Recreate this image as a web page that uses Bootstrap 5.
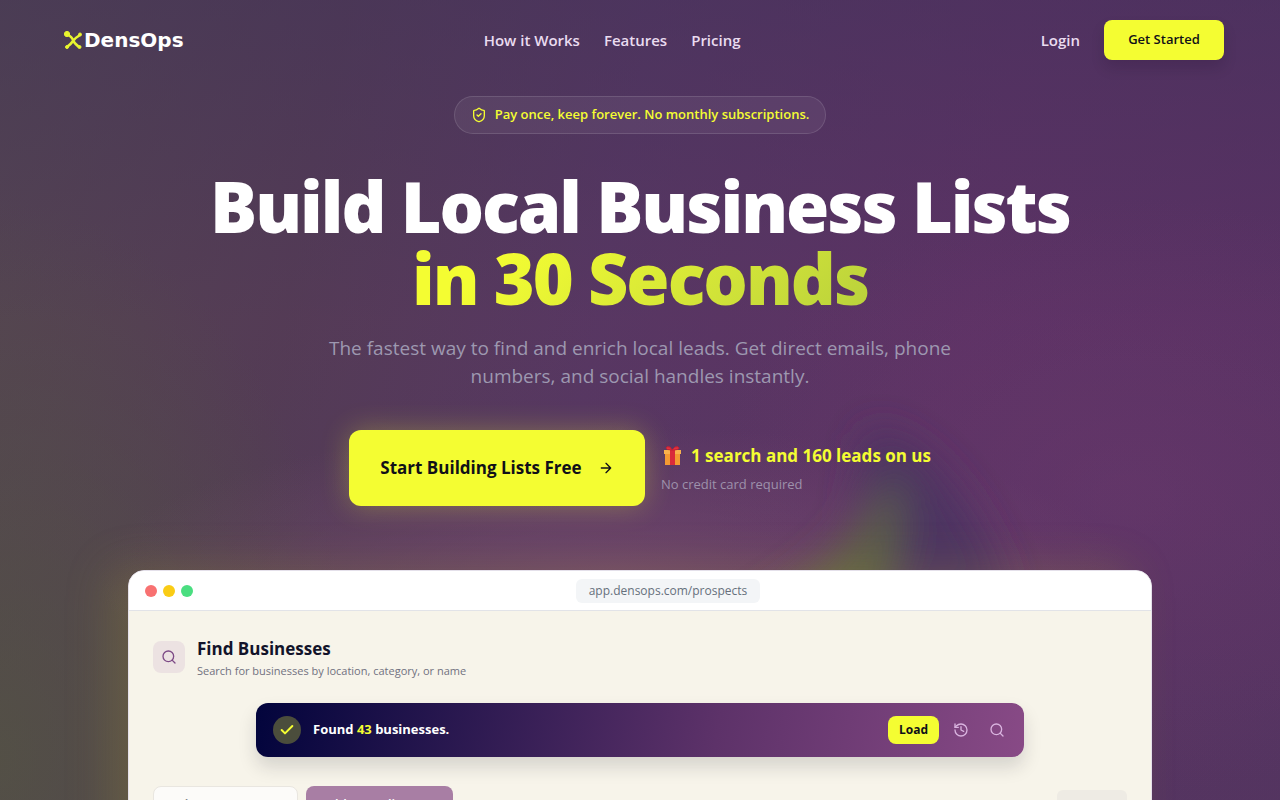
<!DOCTYPE html>
<html lang="en">
<head>
<meta charset="utf-8">
<meta name="viewport" content="width=device-width, initial-scale=1">
<title>DensOps – Build Local Business Lists</title>
<link href="https://cdn.jsdelivr.net/npm/bootstrap@5.3.0/dist/css/bootstrap.min.css" rel="stylesheet">
<style>
  :root { --lime: #f4fd32; --cream: #f7f4ea; --pale: #eadcf0; }
  body { font-family: "Open Sans", "Noto Sans", sans-serif; color: #fff; background: #533560; }
  a { text-decoration: none; }
  .stage {
    position: relative; overflow: hidden; height: 100vh; min-height: 600px; isolation: isolate;
    background:
      radial-gradient(ellipse 420px 300px at 88% 62%, rgba(112,58,112,.4), transparent),
      radial-gradient(ellipse 520px 150px at 48% 72%, rgba(126,80,112,.6), transparent),
      radial-gradient(ellipse 360px 560px at 0% 95%, rgba(84,84,66,.75), transparent),
      linear-gradient(180deg, rgba(68,48,92,.55), rgba(90,48,102,.25) 40%, rgba(76,58,92,.3)),
      linear-gradient(100deg, #524b4b 0%, #523f50 24%, #573961 46%, #5d3364 72%, #573262 100%);
  }
  .blobs { position: absolute; inset: 0; z-index: -1; width: 100%; height: 100%; }
  .topbar { padding: 20px 56px 20px 64px; }
  .brand-word { font-family: "DejaVu Sans", sans-serif; font-weight: 700; font-size: 20px; line-height: 20px; color: #fff; }
  .topbar .menu-link { color: var(--pale); font-size: 15px; font-weight: 600; }
  .topbar .menu-link:hover { color: var(--lime); }
  .btn-lime { --bs-btn-bg: var(--lime); --bs-btn-color: #101018; --bs-btn-border-width: 0; --bs-btn-hover-bg: #e4ed28; --bs-btn-hover-color: #000; --bs-btn-active-bg: #d8e020; }
  .btn-start { width: 120px; height: 40px; font-size: 13px; font-weight: 600; border-radius: 8px; box-shadow: 0 8px 14px rgba(20,10,30,.14); padding: 0; }
  .pill { border: 1px solid rgba(255,255,255,.12); background: rgba(255,255,255,.06); border-radius: 20px; color: var(--lime); height: 38px; padding: 0 16px; font-size: 13px; font-weight: 600; gap: 8px; }
  .headline { font-weight: 800; font-size: 70px; line-height: 72px; letter-spacing: -2px; margin: 36px 0 0; }
  .headline span { background: linear-gradient(135deg, #f4fd32 20%, #b9d13c 98%); -webkit-background-clip: text; background-clip: text; color: transparent; }
  .sub { max-width: 672px; font-size: 19px; line-height: 28px; color: #9d98b0; margin-top: 20px; }
  .btn-cta { width: 296px; height: 76px; font-size: 17px; font-weight: 700; border-radius: 12px; box-shadow: 0 0 28px rgba(244,253,50,.28); gap: 16px; }
  .offer { font-size: 17px; line-height: 28px; font-weight: 700; color: var(--lime); gap: 8px; }
  .offer-note { font-size: 13px; line-height: 20px; color: #9d91ab; margin-top: 4px; }
  .browser { width: 80%; margin: 64px auto 0; border-radius: 16px; box-shadow: -20px -4px 44px rgba(170,160,50,.22); }
  .browser-in { overflow: hidden; border-radius: 16px; border: 1px solid #e4e0ea; background: var(--cream); height: 400px; }
  .chrome { height: 40px; background: #fff; border-bottom: 1px solid #e2e3e8; padding: 0 16px; }
  .dots { gap: 6px; }
  .dot { width: 12px; height: 12px; border-radius: 50%; }
  .dot-red { background: #f87171; }
  .dot-amber { background: #facc15; }
  .dot-green { background: #4ade80; }
  .address { width: 184px; height: 24px; border-radius: 6px; background: #f3f5f7; color: #66707c; font-size: 12px; line-height: 24px; text-align: center; font-weight: 500; }
  .tile { width: 32px; height: 32px; border-radius: 8px; background: #ece2e2; color: #7d4a86; }
  .panel-title { font-size: 17px; line-height: 28px; font-weight: 700; color: #12132a; margin: 0; }
  .panel-sub { font-size: 11px; line-height: 16px; color: #71717f; margin: 0; }
  .found { width: 768px; max-width: 100%; height: 54px; padding: 0 13px 0 17px; border-radius: 12px; background: linear-gradient(100deg, #02043c, #5d3269 60%, #884a86); box-shadow: 0 10px 18px rgba(30,25,40,.15); font-size: 13px; font-weight: 700; }
  .found b { color: var(--lime); font-weight: 700; }
  .tick { width: 28px; height: 28px; border-radius: 50%; background: #4b4d3c; color: var(--lime); }
  .btn-load { width: 51px; height: 28px; font-size: 12px; font-weight: 700; padding: 0; border-radius: 8px; }
  .btn-ghost { width: 28px; height: 28px; padding: 0; border: 0; color: #d9b4df; }
  .toolrow { margin-top: 29px; }
  .btn-tool { height: 36px; border-radius: 8px; padding: 8px 16px; font-size: 13px; line-height: 16px; font-weight: 600; text-align: left; }
  .btn-plain { width: 145px; background: #fcfbf9; border: 1px solid #e9e6e0; color: #86868c; }
  .btn-mauve { width: 147px; background: #a87ea4; border: 0; color: #fff; }
  .btn-tag { width: 70px; height: 28px; background: #eeebe4; border: 0; color: #aaa8ad; font-size: 10px; line-height: 14px; padding: 4px 0; border-radius: 6px; font-weight: 600; }
</style>
</head>
<body>
<div class="stage">
  <svg class="blobs" viewBox="0 0 1280 800" preserveAspectRatio="none" aria-hidden="true">
    <defs><filter id="soft" x="-50%" y="-50%" width="200%" height="200%"><feGaussianBlur stdDeviation="20"/></filter></defs>
    <g filter="url(#soft)">
      <path d="M870 430Q960 455 1010 600L860 610L860 490Z" fill="#43305f" opacity=".75"/>
      <path d="M895 470Q915 540 870 620L740 620Q850 560 895 470Z" fill="#5f6a40" opacity=".8"/>
    </g>
  </svg>
  <header class="topbar d-flex align-items-center justify-content-between">
    <a href="#" class="d-flex align-items-center" aria-label="DensOps">
      <svg width="20" height="20" viewBox="0 0 20 20" fill="#e8f52f" stroke="#e8f52f" aria-hidden="true"><path d="M3 4Q8 7 9 10T15 17M16 5Q11 8 9 11T3 17" fill="none" stroke-width="2.6"/><circle cx="3" cy="4" r="2.6"/><circle cx="16" cy="4.500" r="1.500"/><circle cx="3" cy="17" r="1.500"/><circle cx="15.500" cy="17" r="1.500"/></svg>
      <span class="brand-word">DensOps</span>
    </a>
    <nav class="d-flex gap-4" aria-label="Main">
      <a class="menu-link" href="#how">How it Works</a>
      <a class="menu-link" href="#features">Features</a>
      <a class="menu-link" href="#pricing">Pricing</a>
    </nav>
    <div class="d-flex align-items-center gap-4">
      <a class="menu-link" href="#login">Login</a>
      <button class="btn btn-lime btn-start" type="button">Get Started</button>
    </div>
  </header>
  <main class="d-flex flex-column align-items-center pt-3">
    <div class="pill d-flex align-items-center">
      <svg width="16" height="16" viewBox="0 0 24 24" fill="none" stroke="currentColor" stroke-width="2" stroke-linecap="round" stroke-linejoin="round" aria-hidden="true"><path d="M20 13c0 5-3.500 7.500-7.660 8.950a1 1 0 0 1-.67-.01C7.500 20.500 4 18 4 13V6a1 1 0 0 1 1-1c2 0 4.500-1.200 6.240-2.720a1.170 1.170 0 0 1 1.520 0C14.510 3.810 17 5 19 5a1 1 0 0 1 1 1z"/><path d="m9 12 2 2 4-4"/></svg>
      <span>Pay once, keep forever. No monthly subscriptions.</span>
    </div>
    <h1 class="headline text-center">Build Local Business Lists<br><span>in 30 Seconds</span></h1>
    <p class="sub text-center mb-0">The fastest way to find and enrich local leads. Get direct emails, phone numbers, and social handles instantly.</p>
    <div class="d-flex align-items-center gap-3 mt-4 pt-3">
      <button class="btn btn-lime btn-cta d-flex align-items-center justify-content-center" type="button">Start Building Lists Free
        <svg width="16" height="16" viewBox="0 0 24 24" fill="none" stroke="currentColor" stroke-width="2" stroke-linecap="round" stroke-linejoin="round" aria-hidden="true"><path d="M5 12h14M12 5l7 7-7 7"/></svg>
      </button>
      <div>
        <div class="offer d-flex align-items-center">
          <svg width="22" height="20" viewBox="0 0 22 20" aria-hidden="true"><path d="M4 7h15v12H4z" fill="#f39a32"/><path d="M3 4h17v4H3z" fill="#f9b24c"/><path d="M9 4h5v15H9z" fill="#d92b3a"/><path d="M11 4Q5 4 5 2T9 1L11 4L14 1Q18 0 18 2T11 4" fill="#e13340" stroke="#c62032"/></svg>
          <span>1 search and 160 leads on us</span>
        </div>
        <div class="offer-note">No credit card required</div>
      </div>
    </div>
    <section class="browser">
      <div class="browser-in">
        <div class="chrome d-flex align-items-center gap-2">
          <div class="dots d-flex"><span class="dot dot-red"></span><span class="dot dot-amber"></span><span class="dot dot-green"></span></div>
          <div class="flex-grow-1 d-flex justify-content-center"><div class="address">app.densops.com/prospects</div></div>
        </div>
        <div class="px-4 pt-4">
          <div class="d-flex align-items-center">
            <div class="tile d-flex align-items-center justify-content-center me-2"><svg width="16" height="16" viewBox="0 0 24 24" fill="none" stroke="currentColor" stroke-width="2" stroke-linecap="round" aria-hidden="true"><circle cx="11" cy="11" r="8"/><path d="m21 21-4.300-4.300"/></svg></div>
            <div class="ms-1"><h2 class="panel-title">Find Businesses</h2><p class="panel-sub">Search for businesses by location, category, or name</p></div>
          </div>
          <div class="found d-flex align-items-center mt-4 mx-auto">
            <span class="tick d-flex align-items-center justify-content-center me-2"><svg width="16" height="16" viewBox="0 0 24 24" fill="none" stroke="currentColor" stroke-width="3" stroke-linecap="round" stroke-linejoin="round" aria-hidden="true"><path d="M20 6 9 17l-5-5"/></svg></span>
            <span class="ms-1 me-auto">Found <b>43</b> businesses.</span>
            <button class="btn btn-lime btn-load" type="button">Load</button>
            <button class="btn btn-ghost ms-2 d-flex align-items-center justify-content-center" type="button" aria-label="History"><svg width="16" height="16" viewBox="0 0 24 24" fill="none" stroke="currentColor" stroke-width="2" stroke-linecap="round" stroke-linejoin="round" aria-hidden="true"><path d="M3 12a9 9 0 1 0 9-9 9.750 9.750 0 0 0-6.740 2.740L3 8"/><path d="M3 3v5h5M12 7v5l4 2"/></svg></button>
            <button class="btn btn-ghost ms-2 d-flex align-items-center justify-content-center" type="button" aria-label="Search"><svg width="16" height="16" viewBox="0 0 24 24" fill="none" stroke="currentColor" stroke-width="2" stroke-linecap="round" aria-hidden="true"><circle cx="11" cy="11" r="8"/><path d="m21 21-4.300-4.300"/></svg></button>
          </div>
          <div class="toolrow d-flex align-items-start gap-2">
            <button class="btn btn-tool btn-plain" type="button">Select Page</button>
            <button class="btn btn-tool btn-mauve" type="button">Add to Audience</button>
            <button class="btn btn-tag ms-auto mt-1" type="button">Deselect all</button>
          </div>
        </div>
      </div>
    </section>
  </main>
</div>
<script src="https://cdn.jsdelivr.net/npm/bootstrap@5.3.0/dist/js/bootstrap.bundle.min.js"></script>
</body>
</html>
